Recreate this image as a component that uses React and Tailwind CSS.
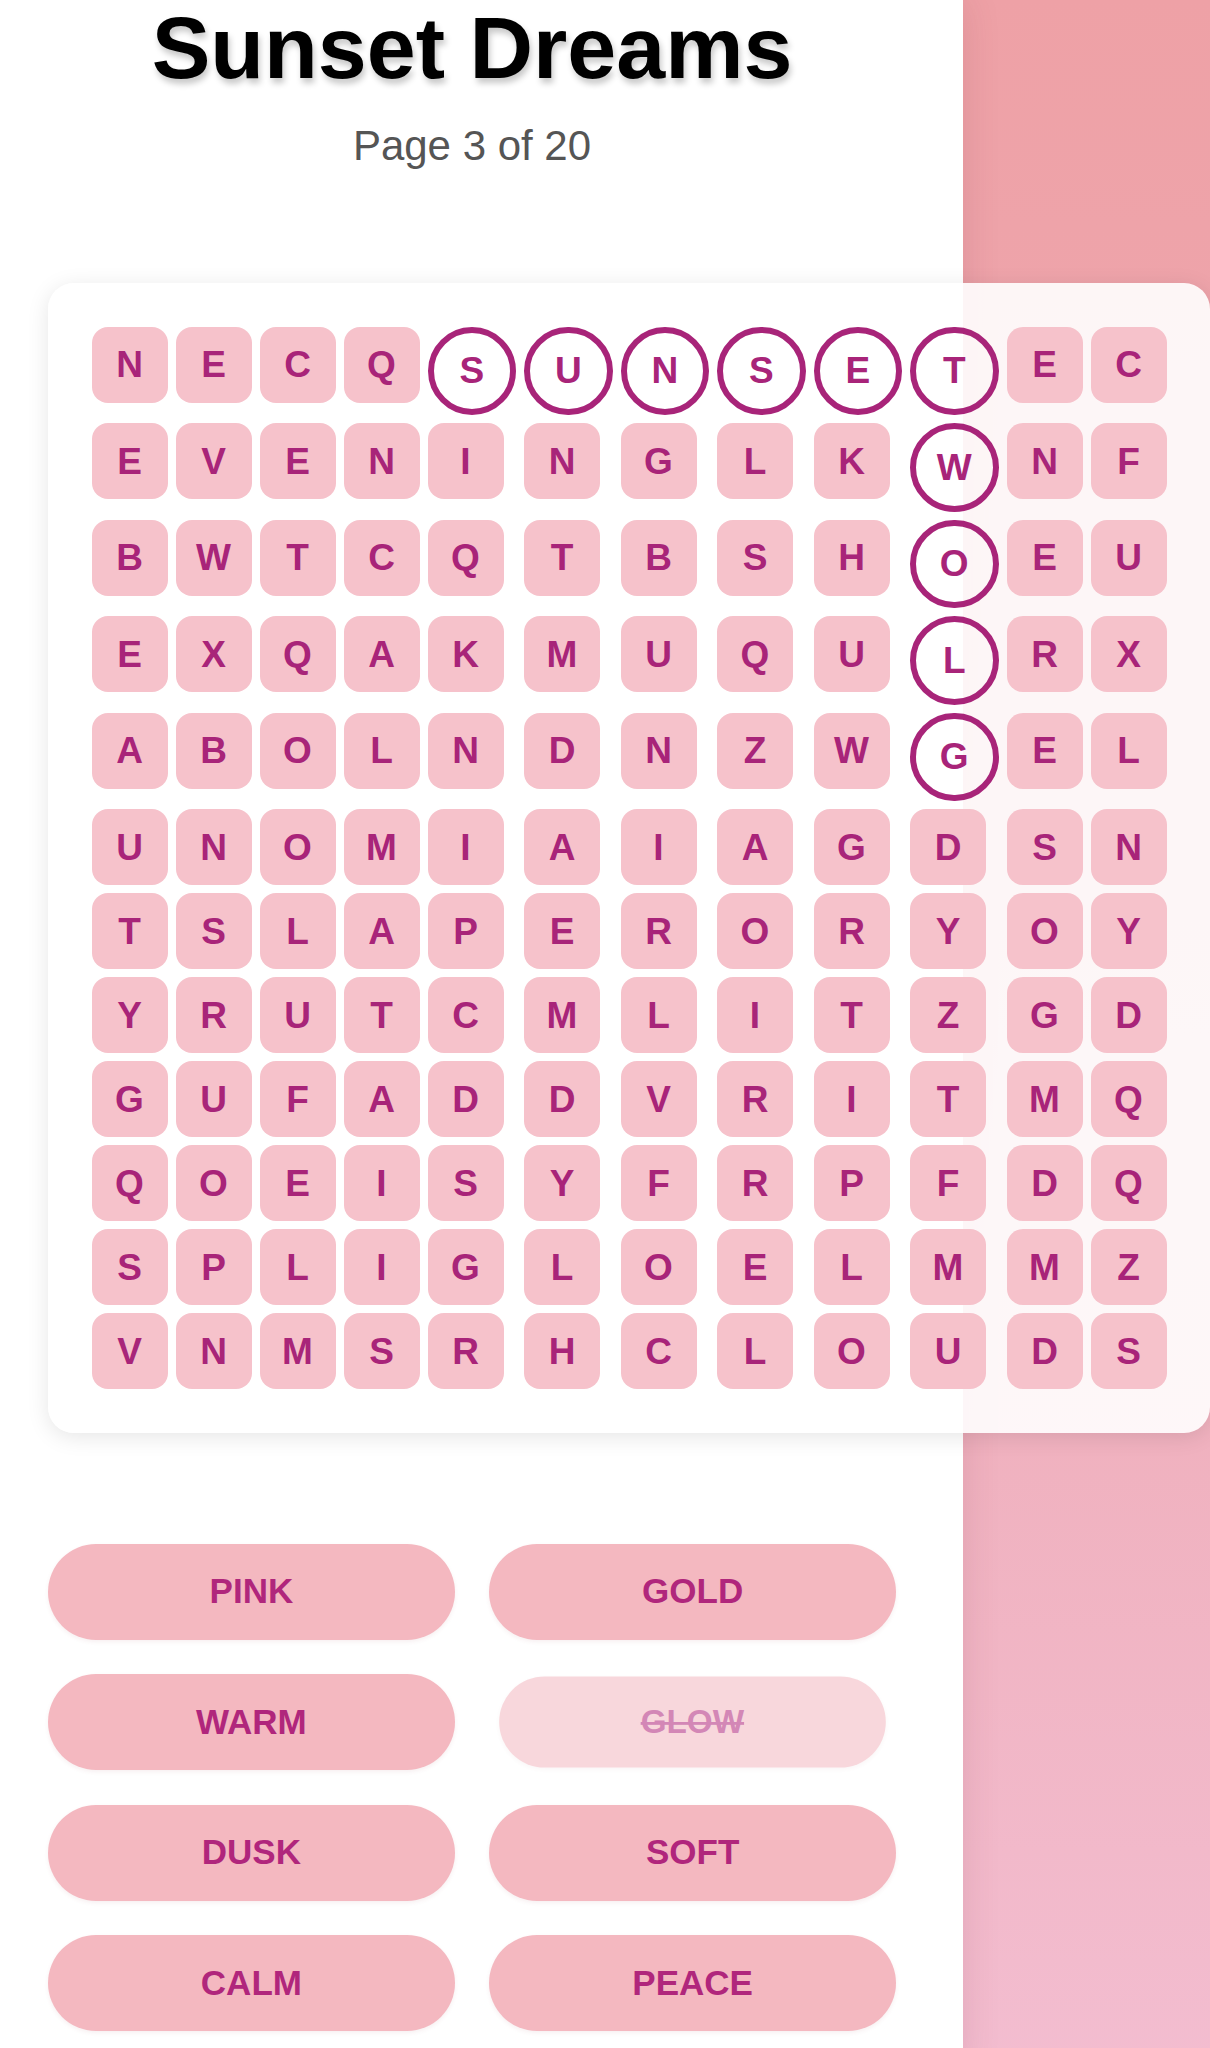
const ROWS = [
  "NECQSUNSETEC",
  "EVENINGLKWNF",
  "BWTCQTBSHOEU",
  "EXQAKMUQULRX",
  "ABOLNDNZWGEL",
  "UNOMIAIAGDSN",
  "TSLAPERORYOY",
  "YRUTCMLITZGD",
  "GUFADDVRITMQ",
  "QOEISYFRPFDQ",
  "SPLIGLOELMMZ",
  "VNMSRHCLOUDS",
];

const CIRCLED = new Set([
  "0-4", "0-5", "0-6", "0-7", "0-8", "0-9",
  "1-9", "2-9", "3-9", "4-9",
]);

const WORDS = [
  { w: "PINK", found: false },
  { w: "GOLD", found: false },
  { w: "WARM", found: false },
  { w: "GLOW", found: true },
  { w: "DUSK", found: false },
  { w: "SOFT", found: false },
  { w: "CALM", found: false },
  { w: "PEACE", found: false },
];

function Cell({ letter, circled }) {
  if (circled) {
    return (
      <div className="flex h-[88.5px] w-[88.5px] items-center justify-center rounded-full border-[6px] border-[#a82479] text-[37px] font-bold leading-none text-[#a82479]">
        {letter}
      </div>
    );
  }
  return (
    <div className="flex h-[76px] w-[76px] items-center justify-center rounded-[16px] bg-[#f6c2cb] text-[37px] font-bold leading-none text-[#a82479]">
      {letter}
    </div>
  );
}

export default function App() {
  return (
    <div className="min-h-[2048px] w-full bg-[linear-gradient(180deg,#eea1a6_0%,#eeaab4_50%,#f3bdd0_100%)] font-['Liberation_Sans',Arial,sans-serif]">
      <div className="min-h-[2048px] w-[963px] bg-white pb-[40px] pl-[48px] shadow-[0_0_36px_rgba(120,40,60,0.14)]">
        <div className="w-[848px]">
          <h1 className="text-center text-[88px] font-bold leading-[96px] text-black [text-shadow:2px_5px_6px_rgba(0,0,0,0.22)]">
            Sunset Dreams
          </h1>
          <p className="mt-[26px] text-center text-[42px] leading-[48px] text-[#555555]">
            Page 3 of 20
          </p>
          <div className="mt-[113px] w-max rounded-[26px] bg-white/90 p-[43.5px] shadow-[0_4px_22px_rgba(0,0,0,0.1)]">
            <div className="grid grid-cols-[repeat(12,auto)] items-start justify-items-start gap-2">
              {ROWS.map((row, r) =>
                row.split("").map((ch, c) => (
                  <Cell key={`${r}-${c}`} letter={ch} circled={CIRCLED.has(`${r}-${c}`)} />
                ))
              )}
            </div>
          </div>
          <div className="mt-[111px] grid grid-cols-2 gap-[34.5px]">
            {WORDS.map((item) => (
              <div
                key={item.w}
                className={
                  item.found
                    ? "flex h-[96px] scale-95 items-center justify-center rounded-full bg-[#f4b8c0] text-[35px] font-bold text-[#b0267c] line-through opacity-[0.55] shadow-[0_2px_4px_rgba(150,60,80,0.08)]"
                    : "flex h-[96px] items-center justify-center rounded-full bg-[#f4b8c0] text-[35px] font-bold text-[#b0267c] shadow-[0_2px_4px_rgba(150,60,80,0.08)]"
                }
              >
                {item.w}
              </div>
            ))}
          </div>
        </div>
      </div>
    </div>
  );
}
